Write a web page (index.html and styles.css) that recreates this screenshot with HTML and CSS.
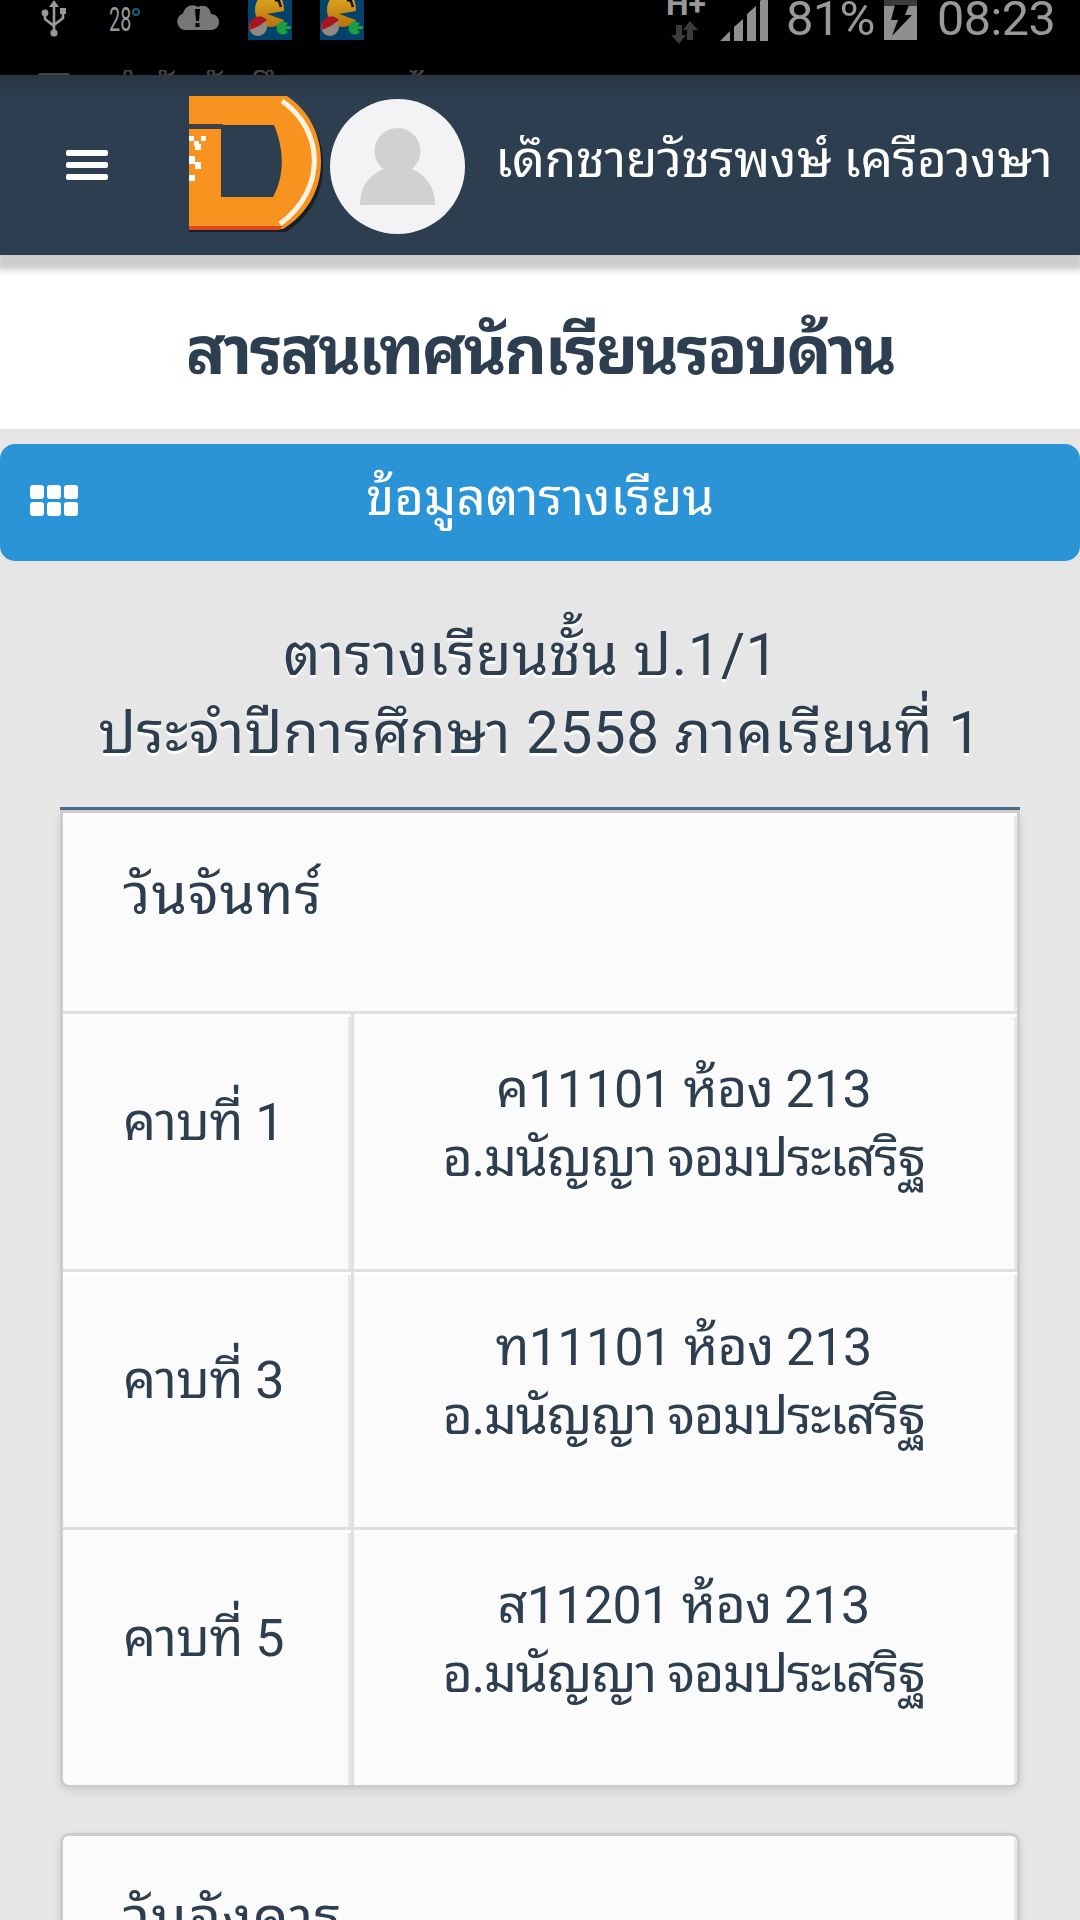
FILE: index.html
```html
<!DOCTYPE html>
<html lang="th">
  <head>
    <meta charset="utf-8">
    <title>สารสนเทศนักเรียนรอบด้าน</title>
    <link rel="stylesheet" href="styles.css">
  </head>
  <body>
    <div class="statusbar">
      <div class="status-row">
        <svg class="usb" width="26" height="38" viewBox="0 0 26 38">
          <path d="M13 4v28M4 14v5l9 7M22 12v6l-9 7" fill="none" stroke="#999" stroke-width="2.6"/>
          <path d="M13 0l5 7H8z" fill="#999"/>
          <circle cx="4" cy="13" r="3.4" fill="#999"/>
          <circle cx="13" cy="33" r="3.6" fill="#999"/>
          <path d="M19 8h6v6h-6z" fill="#999"/>
        </svg>
        <div class="temp"><span>28</span><i></i></div>
        <svg class="cloud" width="44" height="32" viewBox="0 0 44 32">
          <path d="M9 26a8.500 8.500 0 0 1-2-16.500C9 2 16-1 22 3c6-3 12 0 13 7 5 0 8 4 8 8 0 5-4 8-8 8z" fill="#777"/>
          <path d="M19 5h5l-1 12h-3zM19.500 19h4v4h-4z" fill="#000"/>
        </svg>
        <svg class="game" width="44" height="40" viewBox="0 0 44 40">
          <defs>
            <linearGradient id="pac" x1="0" y1="0" x2="0" y2="1">
              <stop offset="0" stop-color="#dba520"/>
              <stop offset="1" stop-color="#b9700c"/>
            </linearGradient>
          </defs>
          <rect width="44" height="40" fill="#01436b"/>
          <path d="M36 11L19 14l17 6c-3 4-8 7-13 7C14 27 7 20 7 10c0-6 2-10 5-12h21c2 3 3 8 3 13z" fill="url(#pac)"/>
          <path d="M27 0l4 1 2 6" fill="none" stroke="#161208" stroke-width="2.500"/>
          <circle cx="10" cy="27" r="9" fill="#918882"/>
          <path d="M2 30A10 10 0 0 1 19 20L11 26z" fill="#a91521"/>
          <path d="M40 24a6.500 6.500 0 1 0 0 8l-3-3h6v-3h-6z" fill="#19a044"/>
        </svg>
        <svg class="game" width="44" height="40" viewBox="0 0 44 40">
          <rect width="44" height="40" fill="#01436b"/>
          <path d="M36 11L19 14l17 6c-3 4-8 7-13 7C14 27 7 20 7 10c0-6 2-10 5-12h21c2 3 3 8 3 13z" fill="url(#pac)"/>
          <path d="M27 0l4 1 2 6" fill="none" stroke="#161208" stroke-width="2.500"/>
          <circle cx="10" cy="27" r="9" fill="#918882"/>
          <path d="M2 30A10 10 0 0 1 19 20L11 26z" fill="#a91521"/>
          <path d="M40 24a6.500 6.500 0 1 0 0 8l-3-3h6v-3h-6z" fill="#19a044"/>
        </svg>
        <div class="network">
          <span class="net-type">H+</span>
          <svg width="28" height="24" viewBox="0 0 28 24">
            <path d="M5 4h6v10h4l-7 9-8-9h5zM16 19V9h-4l7-9 8 9h-5v10z" fill="#3b3b3b"/>
          </svg>
        </div>
        <svg class="signal" width="48" height="41" viewBox="0 0 48 41">
          <path d="M0 41l10-10v10zM14 27l9-8v22h-9zM27 14l9-8v35h-9zM40 1l2-2h6v42h-8z" fill="#8f8f8f"/>
        </svg>
        <span class="percent">81%</span>
        <svg class="battery" width="33" height="40" viewBox="0 0 33 40">
          <path d="M0 0h33v6H0z" fill="#3b3b3b"/>
          <path d="M0 6h33v34H0z" fill="#8f8f8f"/>
          <path d="M11 5h14l-4 10h7L8 36l6-16H7z" fill="#000"/>
        </svg>
        <span class="clock">08:23</span>
      </div>
      <div class="ticker"><i></i><span>กำลังบันทึกภาพหน้าจอ</span></div>
    </div>

    <header class="navbar">
      <div class="menu"><i></i><i></i><i></i></div>
      <svg class="logo" width="134" height="136" viewBox="0 0 134 136">
        <path d="M0 1h97c24 16 37 38 37 68s-14 52-37 67H0z" fill="#14202c"/>
        <path d="M0 0h98c22 15 34 38 34 66s-14 52-38 67H0z" fill="#f7931e"/>
        <path d="M0 130h94l-4 4H0z" fill="#e0491c"/>
        <path d="M32 29h53c10 24 11 50-1 72H32z" fill="#2c3e50"/>
        <path d="M0 28h34v5H0z" fill="#3a4248"/>
        <path d="M93 5c42 29 45 88-2 123" fill="none" stroke="#fff4e4" stroke-width="5"/>
        <path d="M0 40h5v5h5v5h-5v-5H0zM12 40h5v5h-5zM6 48h6v6H6zM0 60h6v6h6v7H6v-5H0zM0 79h6v6H0z" fill="#fff"/>
      </svg>
      <svg class="avatar" width="136" height="136" viewBox="0 0 136 136">
        <circle cx="67.500" cy="67.500" r="67.500" fill="#f3f3f5"/>
        <circle cx="67.500" cy="52" r="23" fill="#d0d1d3"/>
        <path d="M30 106c0-18 9-30 23-36h29c14 6 23 18 23 36z" fill="#d0d1d3"/>
      </svg>
      <div class="user">เด็กชายวัชรพงษ์ เครือวงษา</div>
    </header>

    <div class="page-title"><h1>สารสนเทศนักเรียนรอบด้าน</h1></div>

    <div class="section-bar">
      <div class="grid-icon"><i></i><i></i><i></i><i></i><i></i><i></i></div>
      <span>ข้อมูลตารางเรียน</span>
    </div>

    <main class="content">
      <div class="heading">
        <p class="class-name">ตารางเรียนชั้น ป.1/1</p>
        <p class="term">ประจำปีการศึกษา 2558 ภาคเรียนที่ 1</p>
      </div>
      <div class="card first">
        <div class="day">วันจันทร์</div>
        <div class="row">
          <div class="period">คาบที่ 1</div>
          <div class="subject">ค11101 ห้อง 213<br><span>อ.มนัญญา จอมประเสริฐ</span></div>
        </div>
        <div class="row">
          <div class="period">คาบที่ 3</div>
          <div class="subject">ท11101 ห้อง 213<br><span>อ.มนัญญา จอมประเสริฐ</span></div>
        </div>
        <div class="row">
          <div class="period">คาบที่ 5</div>
          <div class="subject">ส11201 ห้อง 213<br><span>อ.มนัญญา จอมประเสริฐ</span></div>
        </div>
      </div>
      <div class="card">
        <div class="day">วันอังคาร</div>
      </div>
    </main>
  </body>
</html>
```
FILE: styles.css
```css
* {
  box-sizing: border-box;
}
body {
  margin: 0;
  height: 1920px;
  overflow: hidden;
  background: #e6e6e6;
  color: #2c3e50;
  font-family: Roboto, "Droid Sans Thai", "Noto Sans Thai Looped", Loma, "Noto Sans Thai", "Noto Sans", sans-serif;
}
svg {
  display: block;
  flex: none;
}

/* phone status bar */
.statusbar {
  height: 75px;
  background: #000;
  overflow: hidden;
}
.status-row {
  height: 70px;
  display: flex;
  align-items: flex-start;
  color: #999;
}
.usb {
  margin-left: 41px;
}
.temp {
  display: flex;
  width: 31px;
  margin: 3px 0 0 42px;
  height: 34px;
}
.temp span {
  font-size: 33px;
  line-height: 34px;
  width: 22px;
  flex: none;
  transform: scaleX(.6);
  transform-origin: 0 0;
}
.temp i {
  flex: none;
  width: 8px;
  height: 8px;
  margin: 5px 0 0 1px;
  border: 2px solid #0d6578;
  border-radius: 50%;
}
.cloud {
  margin: 4px 0 0 36px;
}
.game {
  margin-left: 28px;
}
.network {
  margin-left: 302px;
  width: 38px;
  flex: none;
}
.net-type {
  display: block;
  font-size: 32px;
  font-weight: bold;
  line-height: 32px;
  height: 21px;
  margin-top: -12px;
  margin-bottom: 12px;
}
.network svg {
  margin-left: 5px;
}
.signal {
  margin-left: 16px;
}
.percent, .clock {
  font-size: 49px;
  line-height: 56px;
  margin-top: -9px;
  flex: none;
}
.percent {
  width: 98px;
  margin-left: 18px;
  letter-spacing: -.8px;
}
.clock {
  margin-left: 20px;
  font-size: 48.5px;
  letter-spacing: -.5px;
}
.ticker {
  display: flex;
  height: 5px;
  overflow: hidden;
  padding-left: 37px;
  font-size: 42px;
  line-height: 39px;
  letter-spacing: -.4px;
  color: #444;
}
.ticker i {
  width: 34px;
  height: 20px;
  margin: 3px 37px 0 0;
  border: 3px solid #444;
  border-radius: 4px;
}

/* app header */
.navbar {
  height: 180px;
  display: flex;
  align-items: flex-start;
  position: relative;
  background: linear-gradient(#293644, #2c3e50 24px);
  box-shadow: 0 12px 6px 3px #ccc;
}
.menu {
  display: flex;
  flex-direction: column;
  gap: 6px;
  width: 42px;
  margin: 75px 0 0 66px;
}
.menu i {
  height: 6px;
  border-radius: 2px;
  background: #fff;
}
.logo {
  margin: 21px 0 0 81px;
}
.avatar {
  margin: 24px 0 0 7px;
}
.user {
  margin: 60px 0 0 29px;
  height: 60px;
  line-height: 49px;
  overflow: hidden;
  white-space: nowrap;
  color: #fff;
  font-size: 51.8px;
  letter-spacing: -.45px;
}

.page-title {
  height: 174px;
  background: #fff;
}
.page-title h1 {
  margin: 0;
  padding-top: 55px;
  text-align: center;
  font-size: 66px;
  line-height: 84px;
  letter-spacing: -2.5px;
}

.section-bar {
  height: 117px;
  margin-top: 15px;
  padding: 0 30px;
  display: grid;
  grid-template-columns: 48px 1fr 48px;
  border-radius: 15px;
  background: #2a94d6;
  color: #fff;
  text-align: center;
  font-size: 51px;
  line-height: 108px;
}
.grid-icon {
  display: grid;
  grid-template-columns: repeat(3, 14px);
  grid-auto-rows: 14px;
  gap: 3px;
  padding-top: 41px;
}
.grid-icon i {
  border-radius: 3px;
  background: #fff;
}

.content {
  padding: 0 60px;
  text-shadow: 0 3px 0 #fff;
}
.heading {
  height: 249px;
  padding-top: 55px;
  border-bottom: 3px solid #4b6c8e;
  font-size: 58.5px;
  line-height: 78px;
  text-align: center;
  white-space: nowrap;
}
.heading p {
  margin: 0;
}
.class-name {
  padding-right: 18px;
  letter-spacing: .4px;
}
.term {
  letter-spacing: .5px;
}

/* timetable */
.card {
  margin-bottom: 45px;
  border: 3px solid #ccc;
  border-radius: 9px;
  background: #fbfbfb;
  box-shadow: 0 3px 9px rgba(0, 0, 0, .1);
  overflow: hidden;
}
.card.first {
  border-radius: 0 0 9px 9px;
}
.day {
  height: 201px;
  padding: 46px 60px 0;
  border-bottom: 3px solid #dfdfdf;
  box-shadow: inset 0 3px #fff, inset -3px 0 #e9e9e9;
  font-size: 57px;
  line-height: 72px;
  letter-spacing: 1px;
}
.row {
  display: flex;
  height: 258px;
  border-bottom: 3px solid #dfdfdf;
  font-size: 52px;
  line-height: 69px;
}
.row:last-child {
  height: 255px;
  border-bottom: 0;
}
.period {
  width: 291px;
  padding: 74px 0 0 60px;
  border-right: 3px solid #dfdfdf;
  box-shadow: inset 0 3px #fff, inset -3px 0 #e7e7e7;
  letter-spacing: -.5px;
}
.subject {
  flex: 1;
  padding: 41px 4px 0 0;
  text-align: center;
  box-shadow: inset 0 3px #fff, inset -3px 0 #e9e9e9;
  letter-spacing: -.65px;
}
.subject span {
  letter-spacing: -1.3px;
}
```
